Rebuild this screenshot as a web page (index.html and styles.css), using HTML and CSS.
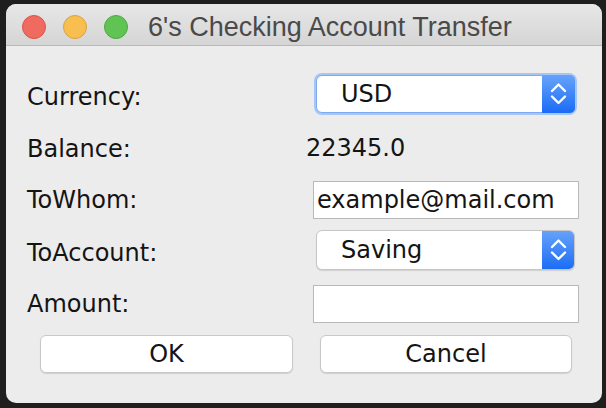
FILE: index.html
```html
<!DOCTYPE html>
<html>
<head>
<meta charset="utf-8">
<link rel="stylesheet" href="styles.css">
</head>
<body>
<div class="window">
  <div class="titlebar">
    <span class="light red"></span>
    <span class="light yellow"></span>
    <span class="light green"></span>
    <span class="title">6's Checking Account Transfer</span>
  </div>
  <div class="form">
    <div class="row r1">
      <span class="label shift6">Currency:</span>
      <div class="combo focused">
        <span class="combo-text">USD</span>
        <span class="stepper">
          <svg width="33" height="38" viewBox="0 0 33 38"><path d="M10 16 L16.5 9.5 L23 16 M10 21.5 L16.5 28 L23 21.5" fill="none" stroke="#fff" stroke-width="2.4" stroke-linecap="round" stroke-linejoin="round"/></svg>
        </span>
      </div>
    </div>
    <div class="row r2">
      <span class="label">Balance:</span>
      <span class="value">22345.0</span>
    </div>
    <div class="row r3">
      <span class="label">ToWhom:</span>
      <div class="field">example@mail.com</div>
    </div>
    <div class="row r4">
      <span class="label shift5">ToAccount:</span>
      <div class="combo">
        <span class="combo-text">Saving</span>
        <span class="stepper">
          <svg width="33" height="40" viewBox="0 0 33 40"><path d="M10 17 L16.5 10.5 L23 17 M10 22.5 L16.5 29 L23 22.5" fill="none" stroke="#fff" stroke-width="2.4" stroke-linecap="round" stroke-linejoin="round"/></svg>
        </span>
      </div>
    </div>
    <div class="row r5">
      <span class="label">Amount:</span>
      <div class="field"></div>
    </div>
    <div class="buttons">
      <div class="btn">OK</div>
      <div class="btn">Cancel</div>
    </div>
  </div>
</div>
</body>
</html>
```

FILE: styles.css
```css
html, body {
  margin: 0;
  padding: 0;
  background: #1e1e1e;
  width: 606px;
  height: 408px;
  overflow: hidden;
}

.window {
  margin: 4px 0 0 6px;
  width: 596px;
  height: 399px;
  border-radius: 10px;
  overflow: hidden;
  background: #ececec;
  font-family: "DejaVu Sans", sans-serif;
  color: #141414;
}

.titlebar {
  height: 41px;
  background: linear-gradient(#e7e7e7, #d5d5d5);
  border-bottom: 1px solid #b8b8b8;
  display: flex;
  align-items: center;
  padding-left: 16px;
  gap: 17px;
  box-sizing: content-box;
}

.light {
  width: 22px;
  height: 22px;
  border-radius: 50%;
  flex: none;
  margin-top: 4px;
}
.red { background: #ef6b5f; border: 1px solid #da5449; }
.yellow { background: #f7bf4f; border: 1px solid #dca23a; }
.green { background: #5fc454; border: 1px solid #4ea843; }

.title {
  margin-left: 3px;
  font-family: "Liberation Sans", Arial, sans-serif;
  font-size: 27px;
  color: #4a4a4a;
  margin-top: 5px;
}

.form {
  padding: 27px 0 0 21px;
  display: flex;
  flex-direction: column;
}

.row {
  display: grid;
  grid-template-columns: 286px 266px;
  align-items: center;
}
.r1 { height: 42px; }
.r2 { height: 29px; margin-top: 19px; }
.r3 { height: 38px; margin-top: 18px; }
.r4 { height: 40px; margin-top: 11px; }
.r5 { height: 38px; margin-top: 15px; }

.label {
  font-size: 24px;
  line-height: 28px;
}
.shift6 { padding-top: 6px; }
.shift5 { padding-top: 5px; }

.value {
  font-size: 24px;
  line-height: 29px;
  margin-left: -7px;
}

.field {
  box-sizing: border-box;
  height: 38px;
  background: #fff;
  border: 1px solid #b9b9b9;
  font-size: 24px;
  line-height: 36px;
  padding-left: 3px;
  white-space: nowrap;
}

.combo {
  box-sizing: border-box;
  margin-left: 3px;
  width: 259px;
  height: 40px;
  background: #fff;
  border: 1px solid #c6c6c6;
  border-radius: 6px;
  box-shadow: 0 1px 1px rgba(0,0,0,0.12);
  display: flex;
  align-items: center;
  overflow: hidden;
  position: relative;
}
.combo.focused {
  height: 38px;
  border: 1px solid #7fa9ef;
  box-shadow: 0 0 0 2px #a5c6f6;
  overflow: visible;
}

.combo-text {
  flex: 1;
  font-size: 24px;
  line-height: 28px;
  padding-left: 24px;
}

.stepper {
  width: 33px;
  align-self: stretch;
  background: linear-gradient(#68a3fa, #1a6cf6);
  display: flex;
  align-items: center;
  justify-content: center;
  border-radius: 0 5px 5px 0;
  margin: -1px -1px -1px 0;
}
.stepper svg { display: block; }

.buttons {
  margin-top: 12px;
  margin-left: 13px;
  display: flex;
  gap: 27px;
}

.btn {
  box-sizing: border-box;
  width: 253px;
  height: 38px;
  background: #fff;
  border: 1px solid #c8c8c8;
  border-radius: 6px;
  box-shadow: 0 1px 1px rgba(0,0,0,0.12);
  font-size: 24px;
  line-height: 36px;
  text-align: center;
}
.btn + .btn { width: 252px; }
```
